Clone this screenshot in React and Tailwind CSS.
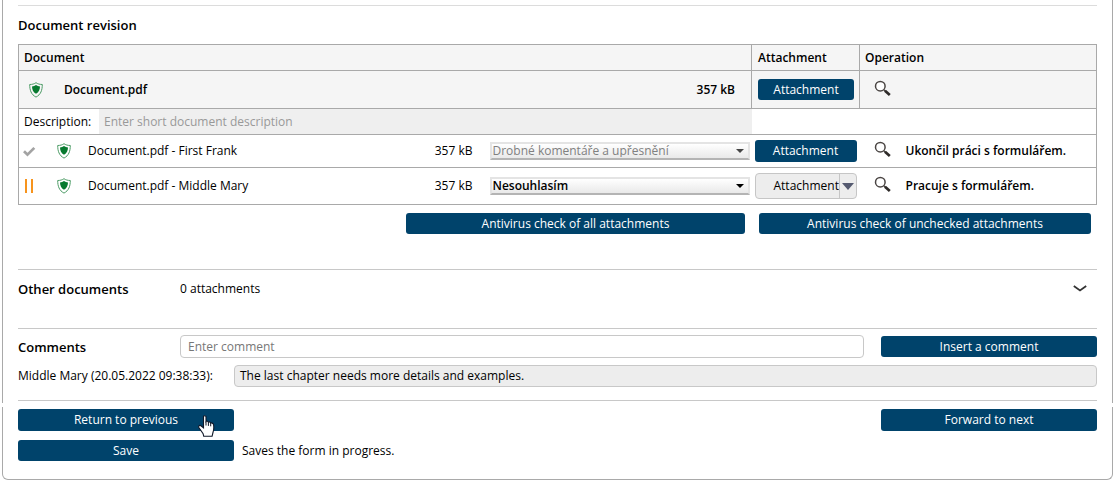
import React from 'react';
import clsx from 'clsx';

const revisions = [
  {
    name: 'Document.pdf - First Frank',
    size: '357 kB',
    status: 'done',
    opinion: 'Drobné komentáře a upřesnění',
    note: 'Ukončil práci s formulářem.',
  },
  {
    name: 'Document.pdf - Middle Mary',
    size: '357 kB',
    status: 'working',
    opinion: 'Nesouhlasím',
    note: 'Pracuje s formulářem.',
  },
];

function PrimaryButton({ className, children }) {
  return (
    <button
      type="button"
      className={clsx('rounded-[3px] bg-[#00436b] text-center text-white hover:bg-[#00568a]', className)}
    >
      {children}
    </button>
  );
}

function ShieldIcon() {
  return (
    <svg className="h-4 w-[14px] shrink-0" viewBox="0 0 14 16" fill="none">
      <path
        d="M7 .7C5.3 1.900 3.200 2.500.7 2.500c0 5.700 1.500 10.100 6.300 12.600 4.800-2.500 6.300-6.900 6.300-12.600C10.800 2.500 8.700 1.900 7 .7Z"
        stroke="#4d9c66"
        strokeWidth="1"
      />
      <path d="M7 3.100c-1.200.8-2.500 1.200-4 1.300.1 3.200 1.200 5.600 4 7.400 2.800-1.800 3.900-4.200 4-7.400-1.500-.1-2.800-.5-4-1.300Z" fill="#077a2f" />
    </svg>
  );
}

function SearchButton() {
  return (
    <button type="button" aria-label="Preview" className="mb-[3px] block shrink-0">
      <svg className="h-[17px] w-[17px]" viewBox="0 0 17 17" fill="none">
        <circle cx="6.300" cy="6.200" r="4.800" stroke="#4a4543" strokeWidth="1.500" fill="#fff" />
        <path d="m9.800 9.800 1.700 1.500" stroke="#4a4543" strokeWidth="1.500" />
        <path d="m11 10.800 4.800 4.200" stroke="#2e2a28" strokeWidth="2.800" />
      </svg>
    </button>
  );
}

function StatusIcon({ status }) {
  if (status === 'done') {
    return (
      <svg className="h-[14px] w-[13px] shrink-0" viewBox="0 0 13 14" fill="none">
        <path d="m1 7.200 3.500 3.500 6.800-6.800" stroke="#a3a3a3" strokeWidth="2.700" />
      </svg>
    );
  }
  return (
    <svg className="h-[14px] w-[13px] shrink-0" viewBox="0 0 13 14" fill="#f7941d">
      <path d="M2 0h2v14H2zM8 0h2v14H8z" />
    </svg>
  );
}

function OpinionSelect({ value, disabled, label }) {
  return (
    <div className="relative flex-1">
      <select
        aria-label={label}
        disabled={disabled}
        defaultValue={value}
        className="block h-[18px] w-full appearance-none border-2 border-[#e4e4e4] border-b-[#b4b4b4] bg-linear-to-b from-white to-[#e9e9e9] pb-px pl-px leading-[13px] font-semibold text-black disabled:font-medium disabled:text-[#808080] disabled:opacity-100"
      >
        <option>{value}</option>
      </select>
      <svg className="pointer-events-none absolute top-[7px] right-[6px] h-1 w-2" viewBox="0 0 8 4">
        <path d="M0 0h8L4 4Z" fill={disabled ? '#444' : '#000'} />
      </svg>
    </div>
  );
}

function HandCursor() {
  return (
    <svg className="pointer-events-none absolute top-[6px] right-[19px] h-[22px] w-[17px]" viewBox="0 0 17 22">
      <path
        d="M5.500 1.800c0-1.500 2.500-1.500 2.500 0v4.700c.6-.7 2.200-.4 2.400.6.700-.5 2 0 2.200 1 .8-.5 2.600.1 2.900 1.400.5 2.500.4 5-.4 7.500l-1 4.200H5.700l-.6-2.500L1 12.800c-.9-1.600.4-3 1.900-2.100l2.600 2.100Z"
        fill="#fff"
        stroke="#101828"
        strokeWidth="1.100"
      />
      <path d="M8 6.500v4M10.400 7.100v3.800M12.700 8.100v3.200" stroke="#101828" strokeWidth="1" />
    </svg>
  );
}

function RevisionTable() {
  return (
    <table className="w-full table-fixed border-collapse border border-[#a9a9a9]">
      <colgroup>
        <col />
        <col className="w-[108px]" />
        <col className="w-[237px]" />
      </colgroup>
      <thead className="bg-[#f5f5f5] text-left">
        <tr className="h-[26px]">
          <th className="border border-[#a9a9a9] px-[5px] font-semibold">Document</th>
          <th className="border border-[#a9a9a9] px-[6px] font-semibold">Attachment</th>
          <th className="border border-[#a9a9a9] px-[5px] font-semibold">Operation</th>
        </tr>
      </thead>
      <tbody>
        <tr className="h-[38px] bg-[#f5f5f5]">
          <td className="border border-[#a9a9a9] pr-4 pl-[10px]">
            <div className="flex items-center font-semibold">
              <ShieldIcon />
              <span className="ml-[21px] flex-1">Document.pdf</span>
              <span>357 kB</span>
            </div>
          </td>
          <td className="border border-[#a9a9a9] pr-[5px] pl-[6px]">
            <PrimaryButton className="block h-[21px] w-full">Attachment</PrimaryButton>
          </td>
          <td className="border border-[#a9a9a9] pl-[14px]">
            <SearchButton />
          </td>
        </tr>
        <tr className="h-[26px] border-b border-[#a9a9a9]">
          <td className="p-0">
            <div className="flex items-center">
              <label htmlFor="description" className="w-20 shrink-0 pl-[5px]">
                Description:
              </label>
              <input
                id="description"
                placeholder="Enter short document description"
                className="h-[25px] min-w-0 flex-1 bg-[#efefef] px-[5px] outline-none placeholder:text-[#999]"
              />
            </div>
          </td>
          <td colSpan={2} />
        </tr>
        {revisions.map((rev) => {
          const done = rev.status === 'done';
          return (
            <tr key={rev.name} className={clsx('border-b border-[#a9a9a9]', done ? 'h-[33px]' : 'h-[37px]')}>
              <td className="py-0 pr-[2px] pl-1">
                <div className="flex items-center">
                  <StatusIcon status={rev.status} />
                  <span className="ml-[21px]">
                    <ShieldIcon />
                  </span>
                  <span className="ml-[17px] flex-1">{rev.name}</span>
                  <span className="mr-[17px]">{rev.size}</span>
                  <div className="flex w-[260px]">
                    <OpinionSelect value={rev.opinion} disabled={done} label={`Opinion for ${rev.name}`} />
                  </div>
                </div>
              </td>
              <td className="px-[3px] py-0">
                {done ? (
                  <PrimaryButton className="block h-[22px] w-full">Attachment</PrimaryButton>
                ) : (
                  <div className="flex h-[26px] overflow-hidden rounded-[4px] border border-[#c6c6c6] bg-[#ededed]">
                    <button type="button" className="flex-1 pl-[18px] text-left">
                      Attachment
                    </button>
                    <button
                      type="button"
                      aria-label="More attachment actions"
                      className="flex w-[18px] items-center justify-center border-l border-[#c6c6c6]"
                    >
                      <svg className="h-[7px] w-3" viewBox="0 0 12 7">
                        <path d="M0 0h12L6 7Z" fill="#555a70" />
                      </svg>
                    </button>
                  </div>
                )}
              </td>
              <td className="py-0 pl-[14px]">
                <div className="flex items-center gap-[15px] font-semibold">
                  <SearchButton />
                  <span>{rev.note}</span>
                </div>
              </td>
            </tr>
          );
        })}
      </tbody>
    </table>
  );
}

export default function App() {
  return (
    <div className="mr-px ml-[2px] font-['Open_Sans',sans-serif] text-[12px] leading-[16px] text-black">
      <main className="border-x border-[#a9a9a9] px-[15px] pt-[5px] pb-[2px]">
        <section className="border-t border-[#dcdcdc] pt-[9px]">
          <h2 className="mb-[9px] text-[13px] leading-[20px] font-semibold">Document revision</h2>
          <RevisionTable />
          <div className="mt-2 flex justify-end gap-[14px] pr-[6px]">
            <PrimaryButton className="h-[21px] w-[339px]">Antivirus check of all attachments</PrimaryButton>
            <PrimaryButton className="h-[21px] w-[332px]">Antivirus check of unchecked attachments</PrimaryButton>
          </div>
        </section>

        <section className="mt-[35px] flex h-[59px] items-start border-t border-[#c8c8c8] pt-[9px]">
          <h2 className="w-[162px] text-[13px] leading-[20px] font-semibold">Other documents</h2>
          <span className="flex-1 leading-[20px]">0 attachments</span>
          <button type="button" aria-label="Show other documents" className="mt-[6px] mr-[10px]">
            <svg className="h-[7px] w-[14px]" viewBox="0 0 14 7" fill="none">
              <path d="m.8 1 6.200 4.400L13.200 1" stroke="#333" strokeWidth="1.800" />
            </svg>
          </button>
        </section>

        <section className="border-t border-[#c8c8c8] pt-[6px]">
          <div className="flex items-center">
            <label htmlFor="comment" className="w-[162px] text-[13px] leading-[20px] font-semibold">
              Comments
            </label>
            <input
              id="comment"
              placeholder="Enter comment"
              className="h-[23px] min-w-0 flex-1 rounded-[4px] border border-[#c8c8c8] px-[7px] outline-none placeholder:text-[#777]"
            />
            <PrimaryButton className="ml-[17px] h-[21px] w-[216px]">Insert a comment</PrimaryButton>
          </div>
          <div className="mt-[7px] flex items-center">
            <span className="w-[216px]">Middle Mary (20.05.2022 09:38:33):</span>
            <p className="flex-1 rounded-[4px] border border-[#c8c8c8] bg-[#ededed] px-[5px] py-[2px]">
              The last chapter needs more details and examples.
            </p>
          </div>
        </section>
        <hr className="mt-[13px] border-[#c8c8c8]" />
      </main>

      <footer className="mt-1 rounded-b-[6px] border-x border-b border-[#a9a9a9] px-[15px] pt-[2px] pb-[18px]">
        <div className="flex justify-between">
          <div className="relative">
            <PrimaryButton className="block h-[22px] w-[216px]">Return to previous</PrimaryButton>
            <HandCursor />
          </div>
          <PrimaryButton className="h-[22px] w-[216px]">Forward to next</PrimaryButton>
        </div>
        <div className="mt-[9px] flex items-center gap-2">
          <PrimaryButton className="h-[21px] w-[216px]">Save</PrimaryButton>
          <span>Saves the form in progress.</span>
        </div>
      </footer>
    </div>
  );
}
